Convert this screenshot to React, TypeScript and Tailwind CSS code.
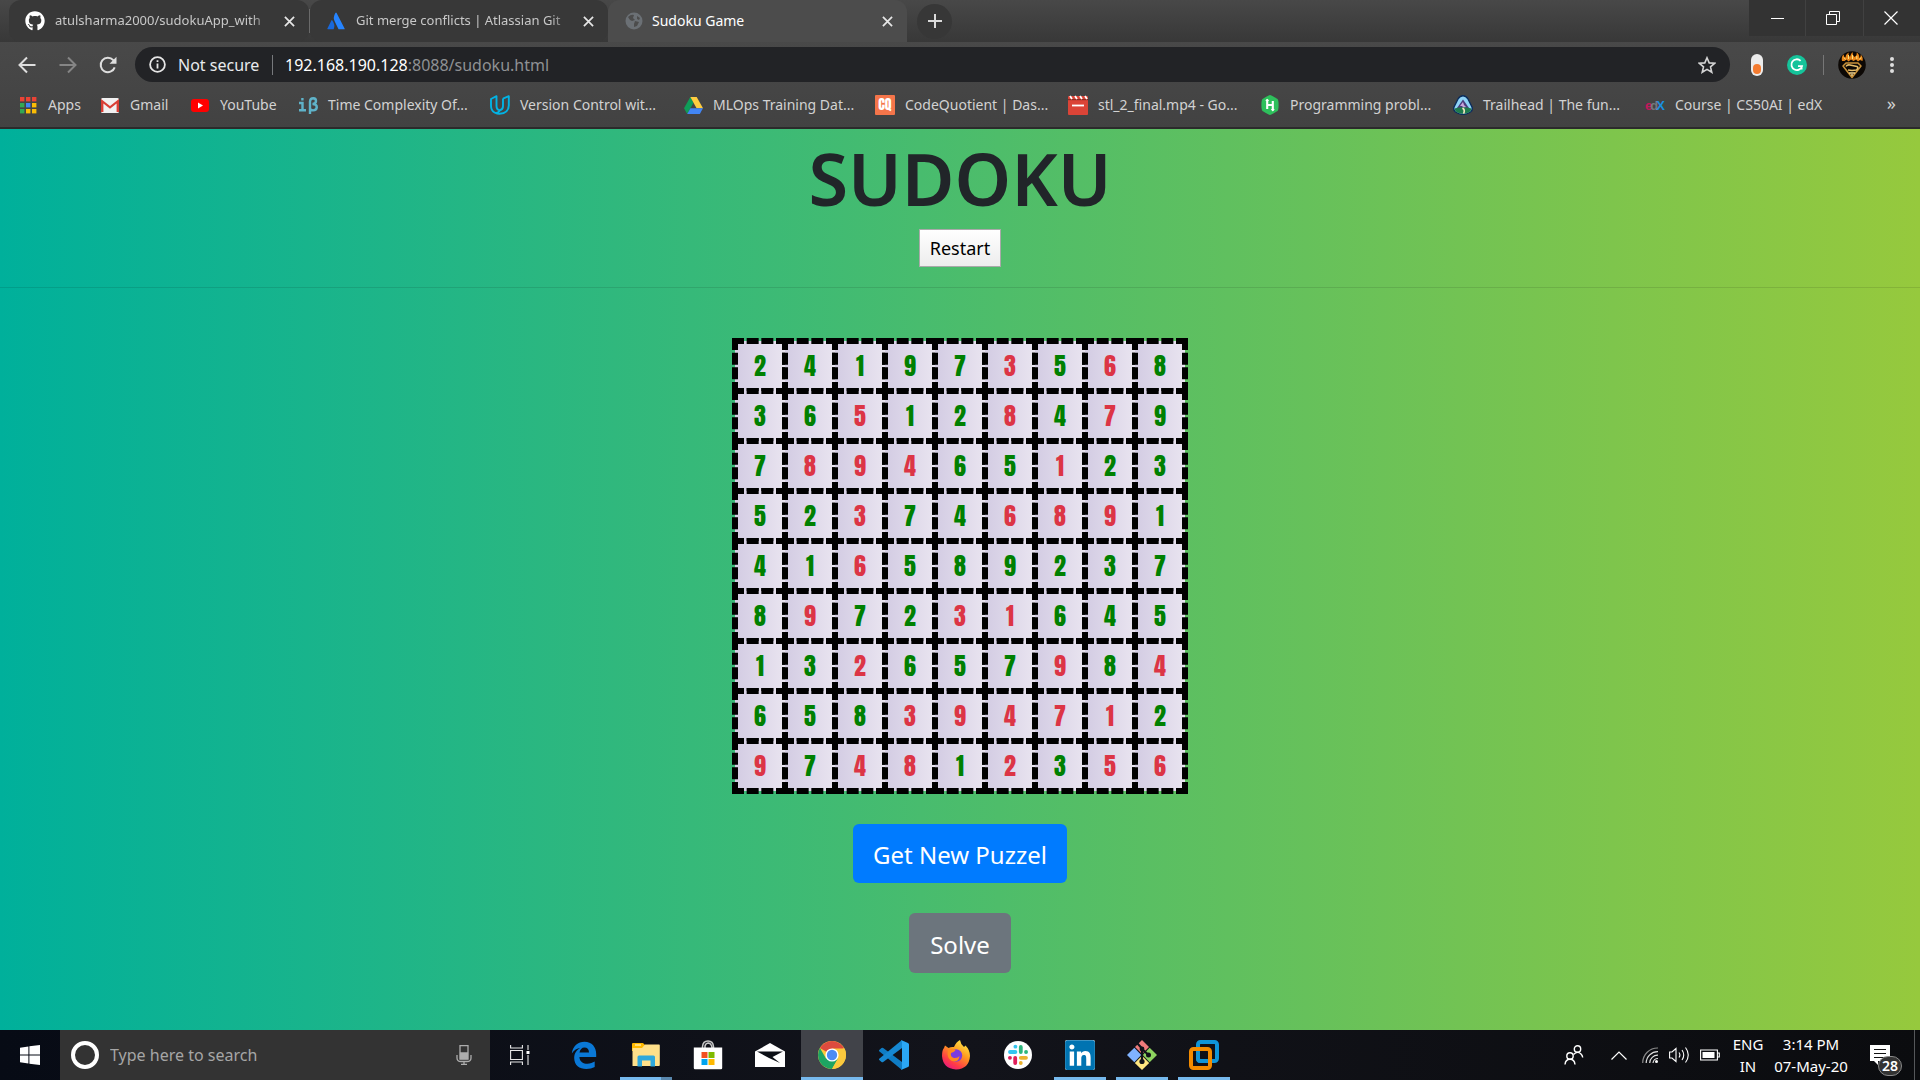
import React from "react";
import { FaGithub, FaLinkedin } from "react-icons/fa";

type IconProps = { className?: string };

const GlobeIcon = () => (
  <svg viewBox="0 0 18 18" className="size-[18px]">
    <circle cx="9" cy="9" r="8.5" fill="#6b7075" />
    <path d="M3 5 Q6 2 9 3 L8 6 L10 8 L7 9 L5 8 Z M10 9 L14 10 L12 14 L9 15 L9 12 Z M12 4 L15 6 L14 8 L12 7 Z" fill="#4c4c4c" />
  </svg>
);

const AtlassianIcon = () => (
  <svg viewBox="0 0 18 18" className="size-[18px]">
    <path d="M5.2 8.3 Q4.7 7.8 4.4 8.5 L.4 16.5 Q.2 17.2 .9 17.3 H6.7 Q8.5 12.5 5.2 8.3Z" fill="#1868db" />
    <path d="M8.4 1 Q5.5 5.5 8 10 L11.3 16.8 Q11.5 17.3 12 17.3 H17.2 Q17.9 17.2 17.6 16.4 L9.6 1 Q9 .2 8.4 1Z" fill="#2684ff" />
  </svg>
);

const CloseIcon = ({ className = "size-3" }: IconProps) => (
  <svg viewBox="0 0 12 12" className={className} fill="none" stroke="currentColor" strokeWidth="1.9">
    <path d="M1 1 L11 11 M11 1 L1 11" />
  </svg>
);

const AppsIcon = () => (
  <svg viewBox="0 0 17 17" className="size-[17px]">
    {["#ea4335", "#ea4335", "#ea4335", "#34a853", "#4285f4", "#fbbc05", "#34a853", "#fbbc05", "#fbbc05"].map((c, i) => (
      <rect key={i} x={(i % 3) * 6} y={Math.floor(i / 3) * 6} width="4.4" height="4.4" fill={c} />
    ))}
  </svg>
);
const GmailIcon = () => (
  <svg viewBox="0 0 18 15" className="h-[15px] w-[18px]">
    <rect x="0" y="0" width="18" height="15" rx="1.5" fill="#f1f1f1" />
    <path d="M0 14 V1 L9 8 L18 1 V14 H15.6 V5.5 L9 10.8 L2.4 5.5 V14Z" fill="#d93f35" />
  </svg>
);
const YouTubeIcon = () => (
  <svg viewBox="0 0 18 13" className="h-[13px] w-[18px]">
    <rect width="18" height="13" rx="3" fill="#f00" />
    <path d="M7 3.6 L12 6.5 L7 9.4Z" fill="#fff" />
  </svg>
);
const IBetaIcon = () => (
  <svg viewBox="0 0 20 17" className="h-[17px] w-5" fill="none" stroke="#5fb3c9" strokeWidth="2.4">
    <path d="M1 6 H4.5 V13 M1 13.2 H8 M3.2 2.2 H5.6" />
    <path d="M12 17 V4.5 Q12.2 1.3 15.3 1.3 Q18 1.5 18 4 Q18 6.8 14.5 7 Q18.8 7.2 18.8 10.2 Q18.5 13.5 15 13.4 Q12.8 13.3 12 12" />
  </svg>
);
const UdacityIcon = () => (
  <svg viewBox="0 0 20 20" className="size-5" fill="none" stroke="#02b3e4" strokeWidth="1.9" strokeLinejoin="round">
    <path d="M1 4 L6.5 1.2 V11 Q6.5 15 10 15.2 Q7.5 19.2 4.5 17.5 Q1 15.5 1 10.5Z" />
    <path d="M13 3.6 L18.8 1.2 V10.5 Q18.5 18.3 9.5 18.8 Q6.8 18.8 6 18 M10 15.2 Q13 14.5 13 11 V3.6" />
  </svg>
);
const DriveIcon = () => (
  <svg viewBox="0 0 19 17" className="h-[17px] w-[19px]">
    <path d="M6.3 0 L0 11.2 L3.2 17 L9.5 5.8Z" fill="#0f9d58" />
    <path d="M6.3 0 H12.7 L19 11.2 H12.6Z" fill="#ffcd40" />
    <path d="M6.4 11.2 H19 L15.8 17 H3.2Z" fill="#4285f4" />
  </svg>
);
const CqIcon = () => (
  <span className="flex size-5 items-center justify-center rounded-[1px] bg-[#f5754a] font-['Impact','Anton','Liberation_Sans',sans-serif] text-sm text-white">
    CQ
  </span>
);
const VideoIcon = () => (
  <svg viewBox="0 0 20 20" className="size-5">
    <rect y="1" width="20" height="19" rx="1" fill="#db4437" />
    <path d="M0 4.6 H20" stroke="#8d2b23" strokeWidth="1.2" />
    <path d="M2 1 L4 4 M7 1 L9 4 M12 1 L14 4 M17 1 L19 4" stroke="#fff" strokeWidth="1.8" />
    <path d="M4 10.5 H16" stroke="#fff" strokeWidth="1.8" />
  </svg>
);
const HackerRankIcon = () => (
  <svg viewBox="0 0 18 20" className="h-5 w-[18px]">
    <path d="M9 0 Q10 0 16.5 4 Q17.6 5 17.6 10 Q17.6 15 16.5 16 Q10 20 9 20 Q8 20 1.5 16 Q.4 15 .4 10 Q.4 5 1.5 4 Q8 0 9 0Z" fill="#2ec05c" />
    <path d="M6.2 4.5 V14 M11.8 6 V15.5 M6.2 10 H11.8" stroke="#fff" strokeWidth="2.1" fill="none" />
    <path d="M4.2 6 L6.2 3.8 L8.2 6Z M9.8 14 L11.8 16.4 L13.8 14Z" fill="#fff" />
  </svg>
);
const TrailheadIcon = () => (
  <svg viewBox="0 0 20 20" className="size-5">
    <path d="M10 .8 Q13 .8 15 4 L19 12 Q20 15 17.5 17 Q14 19.4 10 19.4 Q6 19.4 2.5 17 Q0 15 1 12 L5 4 Q7 .8 10 .8Z" fill="#8fd3f7" stroke="#0b2d5c" strokeWidth="1.4" />
    <path d="M4 13 L10 4.5 L16 13Z" fill="#4b3c7c" />
    <path d="M7 11 L10 7 L11 10 L13 12 L11 13 L9 11Z" fill="#c9a5dd" />
    <path d="M1.6 13.5 Q10 11 18.4 13.5 Q18 18.5 10 18.7 Q2 18.5 1.6 13.5Z" fill="#1f7a4d" />
    <path d="M9.5 13 Q12.5 15 10.5 18.6" stroke="#f3e5c0" strokeWidth="1.6" fill="none" />
  </svg>
);
const EdxIcon = () => (
  <span className="flex w-5 justify-center font-['Liberation_Sans',sans-serif] text-[13px] leading-none font-bold">
    <span className="text-[#c2185b]">e</span>
    <span className="-ml-0.5 text-[#72777c]">d</span>
    <span className="-ml-0.5 text-[#1b8fe0]">X</span>
  </span>
);

const bookmarks: { label: string; width: string; icon: React.ReactNode }[] = [
  { label: "Apps", width: "w-[82px]", icon: <AppsIcon /> },
  { label: "Gmail", width: "w-[90px]", icon: <GmailIcon /> },
  { label: "YouTube", width: "w-[108px]", icon: <YouTubeIcon /> },
  { label: "Time Complexity Of...", width: "w-48", icon: <IBetaIcon /> },
  { label: "Version Control wit...", width: "w-[193px]", icon: <UdacityIcon /> },
  { label: "MLOps Training Dat...", width: "w-48", icon: <DriveIcon /> },
  { label: "CodeQuotient | Das...", width: "w-[193px]", icon: <CqIcon /> },
  { label: "stl_2_final.mp4 - Go...", width: "w-48", icon: <VideoIcon /> },
  { label: "Programming probl...", width: "w-[193px]", icon: <HackerRankIcon /> },
  { label: "Trailhead | The fun...", width: "w-48", icon: <TrailheadIcon /> },
  { label: "Course | CS50AI | edX", width: "w-48", icon: <EdxIcon /> },
];

function Tab({ icon, title, active = false, width }: { icon: React.ReactNode; title: string; active?: boolean; width: string }) {
  return (
    <div className={`flex h-full shrink-0 items-center gap-2 pr-3 pl-4 ${width} ${active ? "rounded-t-xl bg-[#4c4c4c] text-white" : "rounded-xl bg-[#383838] text-[#c8c8c8]"}`}>
      <span className="flex w-5 shrink-0 justify-center">{icon}</span>
      <span className={`min-w-0 flex-1 overflow-hidden whitespace-nowrap ${active ? "text-sm" : "pl-0.5 text-[13px] mask-r-from-90% mask-r-to-100%"}`}>{title}</span>
      <button aria-label={`Close ${title}`} className="flex size-4 shrink-0 items-center justify-center text-[#e6e6e6]">
        <CloseIcon className="size-[11px]" />
      </button>
    </div>
  );
}

function TabStrip() {
  return (
    <div className="flex h-[42px] items-center bg-linear-to-b from-[#484848] to-[#383838] pl-[9px]">
      <Tab width="w-[300px]" title="atulsharma2000/sudokuApp_with" icon={<FaGithub className="size-5 text-white" />} />
      <span className="h-6 w-px bg-[#6a6a6a]" />
      <Tab width="w-[298px]" title="Git merge conflicts | Atlassian Git" icon={<AtlassianIcon />} />
      <Tab width="w-[299px]" title="Sudoku Game" active icon={<GlobeIcon />} />
      <button aria-label="New tab" className="ml-2.5 flex size-[35px] items-center justify-center rounded-full bg-[#373737]">
        <svg viewBox="0 0 14 14" className="size-3.5" stroke="#dadada" strokeWidth="2">
          <path d="M7 0 V14 M0 7 H14" />
        </svg>
      </button>
      <div className="ml-auto flex h-9 self-start bg-[#333]">
        <button aria-label="Minimize" className="flex w-[57px] items-center justify-center border-r border-[#414141]">
          <svg viewBox="0 0 13 13" className="size-[13px]" stroke="#fff"><path d="M0 6.5 H13" /></svg>
        </button>
        <button aria-label="Restore" className="flex w-[58px] items-center justify-center border-r border-[#414141] pr-1">
          <svg viewBox="0 0 14 14" className="size-3.5" stroke="#fff" fill="none">
            <path d="M.5 3.5 H10.5 V13.5 H.5Z M3.5 3.5 V.5 H13.5 V10.5 H10.5" />
          </svg>
        </button>
        <button aria-label="Close window" className="flex w-14 items-center justify-center pr-0.5">
          <svg viewBox="0 0 14 14" className="size-3.5" stroke="#fff" strokeWidth="1.2"><path d="M.5 .5 L13.5 13.5 M13.5 .5 L.5 13.5" /></svg>
        </button>
      </div>
    </div>
  );
}

function Toolbar() {
  return (
    <div className="flex h-[45px] items-center pr-5">
      <div className="flex w-[135px] items-center justify-between pr-[18px] pl-[18px]">
        <button aria-label="Back" className="text-[#dedede]">
          <svg viewBox="0 0 18 18" className="size-[18px]" fill="none" stroke="currentColor" strokeWidth="2"><path d="M17.5 9 H2 M9 1.5 L1.5 9 L9 16.5" /></svg>
        </button>
        <button aria-label="Forward" className="text-[#858585]">
          <svg viewBox="0 0 18 18" className="size-[18px]" fill="none" stroke="currentColor" strokeWidth="2"><path d="M.5 9 H16 M9 1.5 L16.5 9 L9 16.5" /></svg>
        </button>
        <button aria-label="Reload" className="text-[#dedede]">
          <svg viewBox="0 0 18 18" className="size-[18px]" fill="none" stroke="currentColor" strokeWidth="2">
            <path d="M15.7 11.3 A7.2 7.2 0 1 1 14.3 4.2 L16 6" />
            <path d="M17.5 0.8 V7.8 H10.5Z" fill="currentColor" stroke="none" />
          </svg>
        </button>
      </div>
      <div className="flex h-[35px] flex-1 items-center rounded-full bg-[#222326] pr-3.5 pl-3.5 text-base text-[#e8eaed]">
        <svg viewBox="0 0 17 17" className="size-[17px]" fill="none" stroke="#e6e6e6" strokeWidth="1.8">
          <circle cx="8.5" cy="8.5" r="7.4" />
          <path d="M8.5 7.5 V12.5 M8.5 4.3 V6.1" />
        </svg>
        <span className="ml-3 w-[84px] whitespace-nowrap">Not secure</span>
        <span className="mr-3 ml-2.5 h-5 w-px bg-[#77797c]" />
        <div className="min-w-0 flex-1 whitespace-nowrap text-[#8f9194]">
          <span className="text-white">192.168.190.128</span>:8088/sudoku.html
        </div>
        <button aria-label="Bookmark this page">
          <svg viewBox="0 0 18 18" className="size-[18px]" fill="none" stroke="#d4d4d4" strokeWidth="1.6">
            <path d="M9 1.8 L11.2 6.9 L16.6 7.3 L12.5 10.9 L13.8 16.3 L9 13.4 L4.2 16.3 L5.5 10.9 L1.4 7.3 L6.8 6.9Z" />
          </svg>
        </button>
      </div>
      <div className="flex items-center pl-[21px]">
        <button aria-label="Extension" className="flex h-[22px] w-3 items-end justify-center rounded-full bg-[#ececec] p-0.5">
          <span className="h-2.5 w-2 rounded-full bg-[#f47b30]" />
        </button>
        <button aria-label="Grammarly" className="ml-6">
          <svg viewBox="0 0 20 20" className="size-5" fill="none">
            <circle cx="10" cy="10" r="10" fill="#15c39a" />
            <path d="M13.6 5.8 A5.4 5.4 0 1 0 15 11.2 H11 M14.6 10.8 V14.4" stroke="#fff" strokeWidth="1.8" />
          </svg>
        </button>
        <span className="ml-4 h-5 w-px bg-[#777]" />
        <button aria-label="Profile" className="ml-3.5">
          <svg viewBox="0 0 28 28" className="size-7" fill="none" strokeLinejoin="round">
            <circle cx="14" cy="14" r="13.8" fill="#0c0805" />
            <path d="M4 10 Q3 6 5.5 3.5 Q5.8 6 7.5 6.5 Q8 3 10.5 1.5 Q10 4.5 12 6 Q12.5 3 14.5 1 Q14.5 4.5 16.5 6 Q19.5 4 18.5 1.5 Q22 3.5 21 7 Q23.5 5.5 22.5 3.5 Q25.5 6 24.5 10 L22 9 L20 10.5 L18 8.5 L15.5 10 L13 8.5 L10.5 10.5 L8.5 8.5 L6.5 10Z" fill="#e8861a" />
            <path d="M6 6.5 L7.5 8.5 M10.5 4 V8 M14.5 4 V8 M18.8 5 V8 M23 6.5 L21.5 8.5" stroke="#ffe27a" />
            <path d="M5 15 L8 12 H20 L23 15 L14 26.5Z" stroke="#c9913a" strokeWidth="1.5" />
            <path d="M8 15.5 Q9 13.5 12 14 L19 15.5 Q21 16.5 18.5 19 L14 19.5 L10 19" stroke="#e6bd6a" strokeWidth="1.6" />
            <path d="M11 22 H17 M13 24 H15" stroke="#f2d48e" strokeWidth="1.3" />
          </svg>
        </button>
        <button aria-label="Browser menu" className="ml-[18px] flex w-4 flex-col items-center gap-0.5">
          <span className="size-1 rounded-full bg-[#dedede]" />
          <span className="size-1 rounded-full bg-[#dedede]" />
          <span className="size-1 rounded-full bg-[#dedede]" />
        </button>
      </div>
    </div>
  );
}

function BookmarksBar() {
  return (
    <nav aria-label="Bookmarks" className="flex h-[42px] items-center border-b-2 border-[#2b2b2b] pb-1 pl-[18px] text-sm text-[#d2d2d2]">
      {bookmarks.map((b) => (
        <a key={b.label} href="#" className={`flex shrink-0 items-center gap-2.5 whitespace-nowrap ${b.width}`}>
          <span className="flex w-5 shrink-0 justify-center">{b.icon}</span>
          {b.label}
        </a>
      ))}
      <button aria-label="More bookmarks" className="mr-6 ml-auto pb-1 text-lg leading-none">»</button>
    </nav>
  );
}

const grid = ["241973568", "365128479", "789465123", "523746891", "416589237", "897231645", "132657984", "658394712", "974812356"];
const solved = [
  "000001010", "001001010", "011100100", "001001110", "001000000", "010011000", "001000101", "000111110", "101101011",
];

function Sudoku() {
  return (
    <main className="flex flex-1 flex-col items-center bg-linear-to-r/srgb from-[#00b09b] to-[#96c93d] text-[#212529]">
      <h1 className="text-7xl leading-[98px] font-semibold">SUDOKU</h1>
      <button className="mt-0.5 h-[38px] border border-[#a9a9a9] bg-linear-to-b from-white to-[#ededed] px-2.5 text-lg text-black">Restart</button>
      <hr className="mt-5 w-full border-black/10" />
      <table className="mt-[53px] mb-[3px] border-separate border-spacing-0 font-['Impact','Anton','Liberation_Sans',sans-serif] text-2xl leading-none font-normal">
        <tbody>
          {grid.map((row, r) => (
            <tr key={r}>
              {row.split("").map((n, c) => (
                <td key={c} className="h-[50px] w-[50px] bg-linear-to-r/srgb from-[#d3cce3] to-[#e9e4f0] p-0">
                  <div className={`-m-[3px] flex size-14 items-center justify-center border-[6px] border-dashed border-black ${solved[r][c] === "1" ? "text-[#dc3545]" : "text-[#008000]"}`}>
                    {n}
                  </div>
                </td>
              ))}
            </tr>
          ))}
        </tbody>
      </table>
      <button className="mt-[30px] h-[59px] w-[214px] rounded-md bg-[#007bff] pt-0.5 text-2xl text-white">Get New Puzzel</button>
      <button className="mt-[30px] h-[60px] w-[102px] rounded-md bg-[#6c757d] pt-1 text-2xl text-white">Solve</button>
    </main>
  );
}

const TaskViewIcon = () => (
  <svg viewBox="0 0 20 20" className="size-5" fill="none" stroke="#e8e8e8" strokeWidth="1.1">
    <path d="M.6 0 V3 H12.4 V0 M.6 5.5 H12.4 V14.5 H.6Z M.6 20 V17 H12.4 V20 M18 0 V5 M18 10 V20" />
    <rect x="16.5" y="6" width="3" height="3" fill="#fff" stroke="none" />
  </svg>
);
const EdgeIcon = () => (
  <svg viewBox="0 0 26 28" className="h-7 w-[26px]">
    <path d="M.8 12.4 C1.8 5 7 .8 13.5 .8 C21 .8 25.2 6.3 25.2 13 V16 H8.4 C8.7 21 12.5 22.8 16.3 22.8 C19.3 22.8 21.7 21.8 23.7 20.6 V26 C21.4 27.3 18.5 28 15.4 28 C8.4 28 3.2 24.2 3.2 17 C3.2 12 6 8.6 9.5 6.8 C6 7.5 3 9 .8 12.4Z M8.5 11.4 H18 C18 8.4 16.2 6.6 13.5 6.6 C10.8 6.6 9 8.7 8.5 11.4Z" fill="#0a78d6" fillRule="evenodd" />
  </svg>
);
const ExplorerIcon = () => (
  <svg viewBox="0 0 28 24" className="h-6 w-7">
    <path d="M0 1 Q0 0 1 0 H11 L13 2 V8 H0Z" fill="#ffb900" />
    <path d="M.5 5 H10 L13 1.5 H27 Q27.8 1.5 27.8 2.5 V22 Q27.8 23 27 23 H.5Z" fill="#ffe08a" />
    <path d="M3 2 H9" stroke="#fff3c4" strokeWidth="1.2" />
    <path d="M5.5 23.5 V14 Q5.5 12.5 7 12.5 H21.5 Q23 12.5 23 14 V23.5 H18.5 V17.5 H10 V23.5Z" fill="#2fa8dc" />
  </svg>
);
const StoreIcon = () => (
  <svg viewBox="0 0 30 30" className="size-[30px]">
    <path d="M9.5 9 V6.5 Q10 1 15 1 Q20 1 20.5 6.5 V9 M12 8 V6 Q12.8 3 15.5 3 Q18.5 3.5 19 8" fill="none" stroke="#c8c8c8" strokeWidth="1.5" />
    <path d="M.8 7.5 H29.2 V28 Q29.2 29.2 28 29.2 H2 Q.8 29.2 .8 28Z" fill="#fff" />
    <path d="M8.5 12 H14.5 V18 H8.5Z" fill="#f25022" />
    <path d="M15.5 12 H21.5 V18 H15.5Z" fill="#7fba00" />
    <path d="M8.5 19 H14.5 V25 H8.5Z" fill="#00a4ef" />
    <path d="M15.5 19 H21.5 V25 H15.5Z" fill="#ffb900" />
  </svg>
);
const MailIcon = () => (
  <svg viewBox="0 0 30 24" className="h-6 w-[30px]">
    <path d="M0 8.5 L15 0 L30 8.5 V24 H0Z" fill="#fff" />
    <path d="M2 8.5 H28 L17.5 14 L25 20 L14 15Z" fill="#0c0f16" />
  </svg>
);
const ChromeIcon = () => (
  <svg viewBox="0 0 28 28" className="size-7">
    <circle cx="14" cy="14" r="14" fill="#fbc93d" />
    <path d="M14 14 L1.9 7 A14 14 0 0 1 26.1 7Z" fill="#dd4b3e" />
    <path d="M1.9 7 A14 14 0 0 0 14 28 L20 17.5 L14 14 L8 17.5Z" fill="#1da462" />
    <path d="M14 7.5 H26.4 A14 14 0 0 1 14 28 L20 17.5Z" fill="#fbc93d" />
    <circle cx="14" cy="14" r="6.6" fill="#fff" />
    <circle cx="14" cy="14" r="5.2" fill="#4b8bf5" />
  </svg>
);
const VsCodeIcon = () => (
  <svg viewBox="0 0 30 30" className="size-[30px]">
    <path d="M0 10.2 L2.5 8 Q3.4 7.5 4.2 8 L23 22 V30 L.5 11.4 Q-.2 10.8 0 10.2Z" fill="#0f7cc4" />
    <path d="M0 19.8 L2.5 22 Q3.4 22.5 4.2 22 L23 8 V0 L.5 18.6 Q-.2 19.2 0 19.8Z" fill="#1688d2" />
    <path d="M22 0 L29 3 Q30 3.5 30 4.5 V25.5 Q30 26.5 29 27 L22 30 Q23 29 23 28 V2 Q23 1 22 0Z" fill="#2ba7f5" />
  </svg>
);
const FirefoxIcon = () => (
  <svg viewBox="0 0 30 30" className="size-[30px]">
    <defs>
      <linearGradient id="ffBody" x1="0.8" y1="0" x2="0.2" y2="1">
        <stop offset="0" stopColor="#fff04a" /><stop offset=".4" stopColor="#ff9a1f" /><stop offset=".75" stopColor="#ff3b47" /><stop offset="1" stopColor="#e31587" />
      </linearGradient>
    </defs>
    <path d="M4 5.5 L7.5 8 Q10 6.5 13 7 Q15 2 19 0 Q19.5 4 23 7 L24.5 5.5 Q29 10 29 16 Q28 29 15 29.5 Q2 28.5 1 16 Q1 10 3 8Z" fill="url(#ffBody)" />
    <circle cx="15" cy="15.5" r="6.2" fill="#7a3be0" />
    <path d="M7 10 Q10 8.5 14 9.5 Q15 10.5 12.5 12 L10 13 Q9 17 13 18 Q17 18.3 18.5 16 Q18 21.5 13 21.5 Q7 20.5 6.5 14Z" fill="#ff8a1e" />
  </svg>
);
const SlackIcon = () => (
  <svg viewBox="0 0 28 28" className="size-7" strokeWidth="3.8" strokeLinecap="round">
    <circle cx="14" cy="14" r="14" fill="#fff" />
    <path d="M11.4 5.6 V5.7 M6 11 H11.4" stroke="#36c5f0" />
    <path d="M16.8 6 V11 M22 11 H22.1" stroke="#2eb67d" />
    <path d="M22 16.8 H16.8 M16.8 22 V22.1" stroke="#ecb22e" />
    <path d="M11.2 22 V16.8 M5.9 16.8 H6" stroke="#e01e5a" />
  </svg>
);
const LinkedInIcon = () => (
  <span className="flex size-[30px] items-center justify-center rounded-xs bg-white">
    <FaLinkedin className="size-[34px] shrink-0 text-[#0073b1]" />
  </span>
);
const GitIcon = () => (
  <svg viewBox="0 0 30 30" className="size-[30px]">
    <path d="M15 0 L22 7 L15 14 L8 7Z" fill="#f07b7b" />
    <path d="M0 15 L7.3 7.7 L14.3 15 L7.3 22.3Z" fill="#80b3ff" />
    <path d="M30 15 L22.7 7.7 L15.7 15 L22.7 22.3Z" fill="#8dd35f" />
    <path d="M15 30 L7.8 22.9 L15 15.8 L22.2 22.9Z" fill="#ffe680" />
    <path d="M10.5 3.5 L15 8.5 V21 M15 9 L21 14.5" fill="none" stroke="#11131a" strokeWidth="2.2" />
    <circle cx="15" cy="9" r="2.4" fill="#11131a" /><circle cx="15" cy="21.5" r="2.6" fill="#11131a" /><circle cx="21.5" cy="15" r="2.5" fill="#11131a" />
  </svg>
);
const VmwareIcon = () => (
  <svg viewBox="0 0 30 30" className="size-[30px]" fill="none" strokeWidth="4">
    <rect x="9" y="2" width="19" height="19" rx="2.5" stroke="#0f95d8" />
    <rect x="2" y="9" width="19" height="19" rx="2.5" stroke="#f38b00" />
    <path d="M9 14 V18.5 Q9 21 11.5 21 H16" stroke="#0f95d8" />
  </svg>
);

const apps: { name: string; icon: React.ReactNode; state?: "open" | "active" | "multi" }[] = [
  { name: "Edge", icon: <EdgeIcon /> },
  { name: "File Explorer", icon: <ExplorerIcon />, state: "multi" },
  { name: "Store", icon: <StoreIcon /> },
  { name: "Mail", icon: <MailIcon /> },
  { name: "Chrome", icon: <ChromeIcon />, state: "active" },
  { name: "VS Code", icon: <VsCodeIcon /> },
  { name: "Firefox", icon: <FirefoxIcon /> },
  { name: "Slack", icon: <SlackIcon /> },
  { name: "LinkedIn", icon: <LinkedInIcon />, state: "open" },
  { name: "Git Bash", icon: <GitIcon />, state: "open" },
  { name: "VMware", icon: <VmwareIcon />, state: "open" },
];

function Taskbar() {
  return (
    <footer className="flex h-[50px] shrink-0 items-stretch bg-linear-to-r from-[#070b15] via-[#12131a] via-50% to-[#0b0c0f] text-white">
      <button aria-label="Start" className="flex w-[60px] items-center justify-center">
        <svg viewBox="0 0 20 20" className="size-5" fill="#fff"><path d="M0 2.7 L8.4 1.5 V9.5 H0Z M9.4 1.3 L20 0 V9.5 H9.4Z M0 10.5 H8.4 V18.5 L0 17.3Z M9.4 10.5 H20 V20 L9.4 18.7Z" /></svg>
      </button>
      <label className="flex w-[430px] items-center bg-[#333] pr-4 pl-[11px]">
        <span className="size-7 rounded-full border-4 border-white" />
        <input aria-label="Search" placeholder="Type here to search" className="ml-[11px] min-w-0 flex-1 bg-transparent text-base outline-none placeholder:text-[#a6a6a6]" />
        <svg viewBox="0 0 16 20" className="h-5 w-5" fill="none" stroke="#adadad" strokeWidth="1.3">
          <path d="M4 .7 H12 V14 H4Z" /><path d="M4.5 8 H11.5 V13.5 H4.5Z" fill="#adadad" />
          <path d="M1 10 V13 Q1 16.5 5 16.5 H11 Q15 16.5 15 13 V10 M8 16.5 V19.3 M5 19.3 H11" />
        </svg>
      </label>
      <button aria-label="Task view" className="flex w-[63px] items-center justify-center pr-1"><TaskViewIcon /></button>
      {apps.map((a) => (
        <button key={a.name} aria-label={a.name} className={`relative flex w-[62px] items-center justify-center ${a.state === "active" ? "bg-[#414349]" : ""}`}>
          {a.icon}
          {a.state === "active" && <span className="absolute inset-x-0 bottom-0 h-[3px] bg-[#76b9ed]" />}
          {a.state === "open" && <span className="absolute inset-x-[5px] bottom-0 h-[3px] bg-[#76b9ed]" />}
          {a.state === "multi" && <span className="absolute inset-x-[5px] bottom-0 h-[3px] border-r-[11px] border-[#5987ad] bg-[#76b9ed]" />}
        </button>
      ))}
      <div className="ml-auto flex items-center">
        <button aria-label="People">
          <svg viewBox="0 0 20 20" className="size-5" fill="none" stroke="#fff" strokeWidth="1.4">
            <circle cx="13.5" cy="4" r="3.2" /><path d="M9.5 9.5 Q13.5 5.5 17 9 Q18.5 10.5 18.7 12.5" />
            <circle cx="6" cy="11" r="3.2" /><path d="M1 19.5 Q1.5 14.2 6 14.2 Q10.5 14.2 11 19.5" />
          </svg>
        </button>
        <button aria-label="Show hidden icons" className="ml-[27px]">
          <svg viewBox="0 0 16 9" className="h-[9px] w-4" fill="none" stroke="#fff" strokeWidth="1.2"><path d="M.5 8.5 L8 1 L15.5 8.5" /></svg>
        </button>
        <button aria-label="Network" className="ml-[15px]">
          <svg viewBox="0 0 16 16" className="size-4" fill="none" strokeWidth="1.2">
            <path d="M.7 16 A15 15 0 0 1 16 1" stroke="#8a8a8a" /><path d="M4.2 16 A11.5 11.5 0 0 1 16 4.6 M7.7 16 A8 8 0 0 1 16 8.2 M11 16 A5 5 0 0 1 16 11.5" stroke="#e0e0e0" />
            <circle cx="14.5" cy="14.5" r="1.5" fill="#fff" />
          </svg>
        </button>
        <button aria-label="Volume" className="ml-[11px]">
          <svg viewBox="0 0 21 18" className="h-[18px] w-[21px]" fill="none" stroke="#fff" strokeWidth="1.1">
            <path d="M.6 6 H3 L7 2.5 V15.5 L3 12 H.6Z M10 6.5 Q11.8 9 10 11.5 M13 4 Q16.5 9 13 14 M16.5 1.5 Q22 9 16.5 16.5" />
          </svg>
        </button>
        <button aria-label="Battery" className="ml-2.5">
          <svg viewBox="0 0 20 12" className="h-3 w-5"><path d="M.6 1 H17.4 V11 H.6Z M17.4 4 H19.3 V8 H17.4" fill="none" stroke="#fff" strokeWidth="1.1" /><path d="M2.5 3 H14.5 V9 H2.5Z" fill="#fff" /></svg>
        </button>
        <div className="ml-3 w-[32px] text-center text-[15px] leading-[22px]"><div>ENG</div><div>IN</div></div>
        <div className="ml-2.5 w-[74px] text-center text-[15px] leading-[22px] whitespace-nowrap"><div>3:14 PM</div><div>07-May-20</div></div>
        <button aria-label="Notifications, 28 new" className="relative ml-[22px] size-8">
          <svg viewBox="0 0 20 20" className="absolute top-1.5 left-0 size-5"><path d="M0 0 H20 V16 H8 V20 L4 16 H0Z" fill="#fff" /><path d="M4 4.5 H16 M4 8.5 H16 M4 12.5 H16" stroke="#111" strokeWidth="1.2" /></svg>
          <span className="absolute right-0 bottom-[-5px] flex h-5 w-6 items-center justify-center rounded-full border border-[#8a8a8a] bg-[#333] text-sm font-semibold">28</span>
        </button>
        <span className="ml-3 h-[50px] w-1.5 border-l border-[#55575a]" />
      </div>
    </footer>
  );
}

export default function App() {
  return (
    <div className="flex min-h-screen flex-col overflow-hidden font-['Noto_Sans','Open_Sans',sans-serif]">
      <header className="bg-linear-to-b from-[#4c4c4c] to-[#424242]">
        <TabStrip />
        <Toolbar />
        <BookmarksBar />
      </header>
      <Sudoku />
      <Taskbar />
    </div>
  );
}
